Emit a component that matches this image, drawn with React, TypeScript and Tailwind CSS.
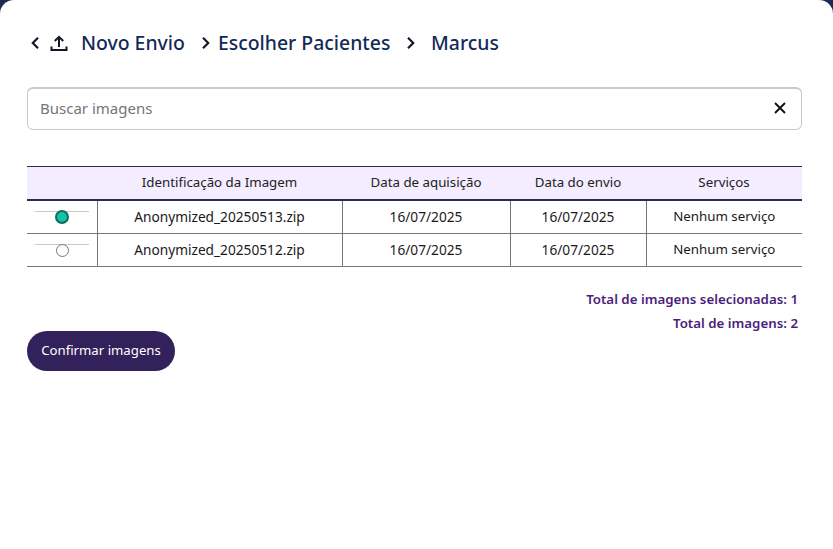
const rows = [
  { name: 'Anonymized_20250513.zip', selected: true },
  { name: 'Anonymized_20250512.zip', selected: false },
];

function Chevron({ left }: { left?: boolean }) {
  return (
    <svg width="10" height="14" viewBox="0 0 10 14" fill="none" stroke="#111827" strokeWidth="2.2">
      <path d={left ? 'M8 1.800 2.800 7 8 12.200' : 'M2 1.800 7.200 7 2 12.200'} />
    </svg>
  );
}

export default function App() {
  return (
    <div className="h-[549px] w-[833px] overflow-hidden bg-[#1f2a52]">
      <main className="h-full rounded-t-[14px] bg-white pt-[29px] pr-[31px] pl-[27px] font-['Noto_Sans',sans-serif] text-[#1a1a1a]">
        <header className="flex h-7 items-center text-[19.4px] font-medium text-[#122a58]">
          <span className="ml-[3px]"><Chevron left /></span>
          <svg className="ml-[10px]" width="18" height="18" viewBox="0 0 18 18" fill="none" stroke="#111827" strokeWidth="2">
            <path d="M9 13V3M4.800 7 9 2.800 13.200 7M1.500 12.500V16h15v-3.500" />
          </svg>
          <span className="ml-[13px] w-[108px] whitespace-nowrap">Novo Envio</span>
          <span className="ml-[12px]"><Chevron /></span>
          <span className="ml-[7px] w-[173px] whitespace-nowrap">Escolher Pacientes</span>
          <span className="ml-[15px]"><Chevron /></span>
          <span className="ml-[15px]">Marcus</span>
        </header>

        <div className="mt-[30px] flex h-[43px] items-center justify-between rounded-md border border-t-2 border-[#c9c9c9] pr-[14px] pb-[2px] pl-3 text-[15px] text-[#757575]">
          <span>Buscar imagens</span>
          <svg width="14" height="14" viewBox="0 0 14 14" fill="none" stroke="#111" strokeWidth="1.900">
            <path d="m2 2 10 10M12 2 2 12" />
          </svg>
        </div>

        <table className="mt-[36px] w-[775px] table-fixed border-collapse text-center text-[13.700px]">
          <thead>
            <tr className="h-[33px] border-t border-b-2 border-t-[#2d2a55] border-b-[#2d2a55] bg-[#f3edff] text-[13.300px] text-[#222]">
              <th className="w-[70px] font-normal"></th>
              <th className="w-[245px] font-normal">Identificação da Imagem</th>
              <th className="w-[168px] font-normal">Data de aquisição</th>
              <th className="w-[136px] font-normal">Data do envio</th>
              <th className="font-normal">Serviços</th>
            </tr>
          </thead>
          <tbody>
            {rows.map((row) => (
              <tr key={row.name} className="h-[33px] border-b border-[#777]">
                <td className="border-r border-[#777]">
                  <div className="relative mx-auto h-[32px] w-[54px]">
                    <div className="absolute top-[10px] h-px w-full bg-[#c9c9c9]" />
                    {row.selected ? (
                      <div className="absolute top-[9px] left-[20px] size-[14px] rounded-full border-2 border-[#0f6b62] bg-[#12c4a2]" />
                    ) : (
                      <div className="absolute top-[10px] left-[21px] size-[13px] rounded-full border border-[#777] bg-white" />
                    )}
                  </div>
                </td>
                <td className="border-r border-[#777] pt-px">{row.name}</td>
                <td className="border-r border-[#777] pt-px">16/07/2025</td>
                <td className="border-r border-[#777] pt-px">16/07/2025</td>
                <td className="pt-px text-[13.300px]">Nenhum serviço</td>
              </tr>
            ))}
          </tbody>
        </table>

        <div className="mt-[20px] pr-1 text-right text-[13.300px] leading-6 font-semibold text-[#4c1d7a]">
          <p>Total de imagens selecionadas: 1</p>
          <p>Total de imagens: 2</p>
        </div>

        <button className="-mt-[4px] block h-10 w-[148px] rounded-full bg-[#32215a] text-[13.200px] text-white">
          Confirmar imagens
        </button>
      </main>
    </div>
  );
}
